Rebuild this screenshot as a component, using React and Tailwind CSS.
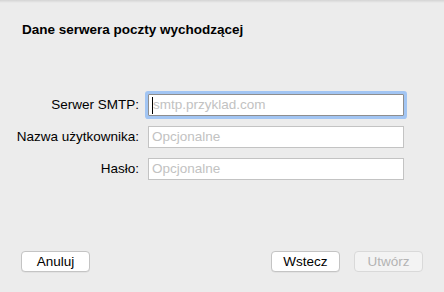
export default function App() {
  const Field = ({ label, placeholder, focused }) => (
    <div className="flex items-center h-[22px]">
      <div className="w-[139px] text-right text-[13.5px] leading-[16px] text-black whitespace-nowrap">{label}</div>
      <div
        className={
          "ml-[9px] w-[256px] h-[22px] bg-white border flex items-center " +
          (focused
            ? "border-[#8e8e8e] rounded-[1px] shadow-[0_0_0_3px_#a2c5f3] pl-[3px]"
            : "border-[#c3c3c3] pl-[3px]")
        }
      >
        {focused && <span className="w-px h-[17px] bg-black" />}
        <span className="text-[13.5px] leading-[16px] text-[#c2c2c2]">{placeholder}</span>
      </div>
    </div>
  );
  const Btn = ({ children, disabled }) => (
    <div
      className={
        "w-[69px] h-[21px] rounded-[4px] border flex items-center justify-center text-[13.5px] leading-[16px] " +
        (disabled
          ? "bg-[#f3f3f3] border-[#d9d9d9] text-[#b4b4b4]"
          : "bg-white border-[#c4c4c4] text-black shadow-[0_0.5px_0.5px_rgba(0,0,0,0.08)]")
      }
    >
      {children}
    </div>
  );
  return (
    <div className="w-[444px] h-[292px] bg-[#ececec] flex flex-col overflow-hidden font-['Liberation_Sans',Arial,sans-serif]">
      <div className="h-[3px] bg-gradient-to-b from-[#d4d4d4] to-[#ececec]" />
      <h1 className="ml-[22px] mt-[19px] text-[13.5px] leading-[15px] font-bold text-black">
        Dane serwera poczty wychodzącej
      </h1>
      <div className="mt-[57px] flex flex-col gap-[10px]">
        <Field label="Serwer SMTP:" placeholder="smtp.przyklad.com" focused />
        <Field label="Nazwa użytkownika:" placeholder="Opcjonalne" />
        <Field label="Hasło:" placeholder="Opcjonalne" />
      </div>
      <div className="mt-auto mb-[20px] px-[21px] flex justify-between">
        <Btn>Anuluj</Btn>
        <div className="flex gap-[14px]">
          <Btn>Wstecz</Btn>
          <Btn disabled>Utwórz</Btn>
        </div>
      </div>
    </div>
  );
}
